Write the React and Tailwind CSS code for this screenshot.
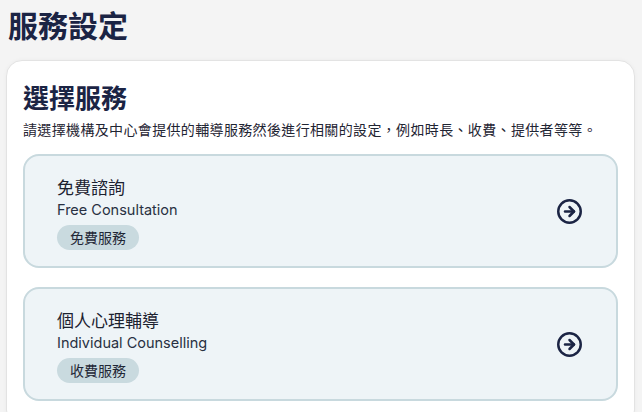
import React from 'react';

const services = [
    { id: 'free', title: '免費諮詢', subtitle: 'Free Consultation', tag: '免費服務' },
    { id: 'individual', title: '個人心理輔導', subtitle: 'Individual Counselling', tag: '收費服務' },
];

function ArrowCircle() {
    return (
        <svg width="27" height="27" viewBox="0 0 24 24" fill="none" stroke="#1b2444" strokeWidth="2.2" strokeLinecap="round" strokeLinejoin="round">
            <circle cx="12" cy="12" r="10" />
            <path d="m12 16 4-4-4-4" />
            <path d="M8 12h8" />
        </svg>
    );
}

function ServiceCard({ service }) {
    return (
        <button className="w-full flex items-center justify-between text-left rounded-[16px] border-2 border-[#c8d9de] bg-[#eef4f7] pl-8 pr-[33px] pt-5 pb-4">
            <div className="flex flex-col items-start">
                <span className="text-[17px] leading-6 text-[#1c2230]">{service.title}</span>
                <span className="text-[14.5px] leading-5 text-[#283042]">{service.subtitle}</span>
                <span className="mt-[5px] inline-flex items-center h-[25px] px-[13px] rounded-full bg-[#c9dadf] text-[14px] text-[#1f2736]">
                    {service.tag}
                </span>
            </div>
            <span className="-mt-[3px]">
                <ArrowCircle />
            </span>
        </button>
    );
}

export default function App() {
    return (
        <div
            className="min-h-screen bg-[#f4f4f4] px-[6px] pt-2 pb-6"
            style={{ fontFamily: 'Inter, "Noto Sans CJK TC", sans-serif' }}
        >
            <h1 className="pl-[2px] text-[30px] leading-9 font-bold text-[#1b2444]">服務設定</h1>

            <div className="mt-4 w-[629px] rounded-[16px] border border-[#e3e3e3] bg-white px-4 pt-[22px] pb-6 shadow-[0_0_4px_rgba(0,0,0,0.04)]">
                <h2 className="text-[26px] leading-8 font-bold text-[#1b2444]">選擇服務</h2>
                <p className="mt-[5px] text-[14px] leading-5 tracking-[0.35px] text-[#1f2533]">
                    請選擇機構及中心會提供的輔導服務然後進行相關的設定，例如時長、收費、提供者等等。
                </p>

                <div className="mt-[14px] flex flex-col gap-[19px]">
                    {services.map(service => (
                        <ServiceCard key={service.id} service={service} />
                    ))}
                </div>
            </div>
        </div>
    );
}
